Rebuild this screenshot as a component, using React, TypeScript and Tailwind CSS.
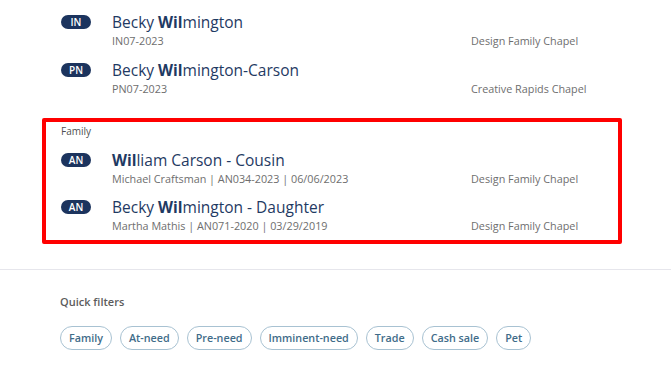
import React from "react";

type Row = { badge: string; pre: string; bold: string; post: string; sub: string; chapel: string };

const top: Row[] = [
  { badge: "IN", pre: "Becky ", bold: "Wil", post: "mington", sub: "IN07-2023", chapel: "Design Family Chapel" },
  { badge: "PN", pre: "Becky ", bold: "Wil", post: "mington-Carson", sub: "PN07-2023", chapel: "Creative Rapids Chapel" },
];

const family: Row[] = [
  { badge: "AN", pre: "", bold: "Wil", post: "liam Carson - Cousin", sub: "Michael Craftsman | AN034-2023 | 06/06/2023", chapel: "Design Family Chapel" },
  { badge: "AN", pre: "Becky ", bold: "Wil", post: "mington - Daughter", sub: "Martha Mathis | AN071-2020 | 03/29/2019", chapel: "Design Family Chapel" },
];

const filters = ["Family", "At-need", "Pre-need", "Imminent-need", "Trade", "Cash sale", "Pet"];

function ResultRow({ r }: { r: Row }) {
  return (
    <div className="grid grid-cols-[51px_359px_1fr] h-[37px]">
      <div className="pt-[4px]">
        <span className="flex items-center justify-center w-[30px] h-[14px] rounded-full bg-[#1c345e] text-white text-[10px] font-semibold leading-none">
          {r.badge}
        </span>
      </div>
      <div className="flex flex-col">
        <div className="text-[15.5px] leading-[22px] text-[#1f3a63] whitespace-nowrap">
          {r.pre}
          <span className="font-bold">{r.bold}</span>
          {r.post}
        </div>
        <div className="text-[10.8px] leading-[16px] text-[#6e6e6e] whitespace-nowrap">{r.sub}</div>
      </div>
      <div className="flex flex-col justify-end">
        <div className="text-[10.8px] leading-[16px] text-[#6e6e6e] whitespace-nowrap">{r.chapel}</div>
      </div>
    </div>
  );
}

export default function App() {
  return (
    <div className="w-[671px] h-[377px] bg-white overflow-hidden" style={{ fontFamily: '"Open Sans", "Noto Sans", sans-serif' }}>
      <div className="pl-[61px] pt-[11px] flex flex-col gap-[11px]">
        {top.map((r, i) => (
          <ResultRow key={i} r={r} />
        ))}
      </div>
      <div className="mt-[22px] ml-[42px] w-[580px] h-[126px] border-4 border-[#ff0000] rounded-[2px] pl-[15px] pt-[2px]">
        <div className="text-[10px] leading-[14px] text-[#4f4f4f]">Family</div>
        <div className="mt-[11px] flex flex-col gap-[10px]">
          {family.map((r, i) => (
            <ResultRow key={i} r={r} />
          ))}
        </div>
      </div>
      <div className="mt-[25px] h-px bg-[#e6e6ec]" />
      <div className="pl-[60px] pt-[24px]">
        <div className="text-[11px] leading-[16px] font-semibold text-[#5c5c5c]">Quick filters</div>
        <div className="mt-[16px] flex gap-[8px]">
          {filters.map((f) => (
            <span
              key={f}
              className="h-[24px] px-[8px] flex items-center rounded-full border border-[#a8c2d2] text-[10.75px] font-semibold text-[#3f6c89] whitespace-nowrap"
            >
              {f}
            </span>
          ))}
        </div>
      </div>
    </div>
  );
}
